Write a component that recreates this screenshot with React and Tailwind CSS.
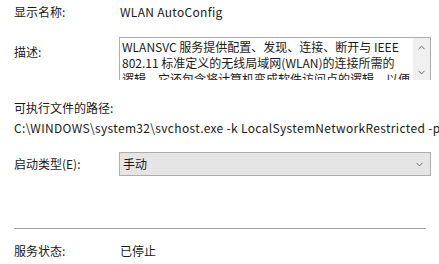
import { ChevronDown, ChevronUp } from 'lucide-react';

const font = "font-['Segoe_UI','Microsoft_YaHei','Noto_Sans_CJK_SC',sans-serif]";

export default function App() {
  return (
    <div className={`w-[439px] h-[264px] bg-white overflow-hidden text-[12px] leading-[16px] text-[#1a1a1a] ${font}`}>
      <div className="pl-[14px]">
        {/* display name */}
        <div className="flex pt-[4px]">
          <div className="w-[106px]">显示名称:</div>
          <div className="tracking-[0.3px]">WLAN AutoConfig</div>
        </div>

        {/* description */}
        <div className="flex mt-[17px]">
          <div className="w-[105px] pt-[7px]">描述:</div>
          <div className="w-[312px] h-[43px] border-t border-l border-r border-[#adadad] flex overflow-hidden">
            <div className="flex-1 pl-[2px] pt-[1px] whitespace-nowrap overflow-hidden">
              <div>WLANSVC 服务提供配置、发现、连接、断开与 IEEE</div>
              <div>802.11 标准定义的无线局域网(WLAN)的连接所需的</div>
              <div>逻辑。它还包含将计算机变成软件访问点的逻辑，以便</div>
            </div>
            <div className="w-[17px] bg-[#f0f0f0] flex flex-col items-center justify-between pt-[4px] pb-[2px] text-[#606060]">
              <ChevronUp className="w-[11px] h-[11px]" strokeWidth={2} />
              <ChevronDown className="w-[11px] h-[11px]" strokeWidth={2} />
            </div>
          </div>
        </div>

        {/* path */}
        <div className="mt-[20px]">可执行文件的路径:</div>
        <div className="mt-[4px] whitespace-nowrap tracking-[0.33px]">C:\WINDOWS\system32\svchost.exe -k LocalSystemNetworkRestricted -p</div>

        {/* startup type */}
        <div className="flex items-center mt-[16px]">
          <div className="w-[105px]">启动类型(E):</div>
          <div className="w-[312px] h-[24px] bg-[#e5e5e5] border border-[#adadad] flex items-center justify-between pl-[3px] pr-[5px]">
            <span>手动</span>
            <ChevronDown className="w-[11px] h-[11px] text-[#404040]" strokeWidth={1.5} />
          </div>
        </div>

        {/* separator */}
        <div className="mt-[52px] w-[412px] h-px bg-[#a0a0a0]" />

        {/* status */}
        <div className="flex mt-[14px]">
          <div className="w-[106px]">服务状态:</div>
          <div>已停止</div>
        </div>
      </div>
    </div>
  );
}
